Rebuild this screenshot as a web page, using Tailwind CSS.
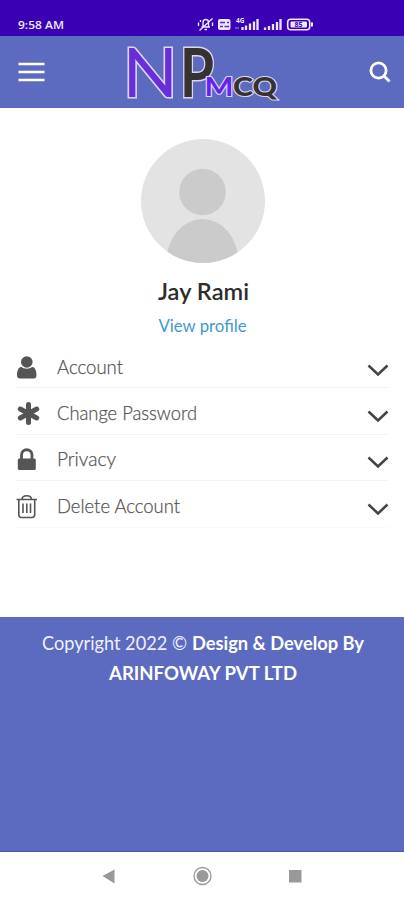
<!DOCTYPE html>
<html lang="en">
<head>
<meta charset="utf-8">
<meta name="viewport" content="width=device-width, initial-scale=1">
<title>Profile</title>
<script src="https://cdn.jsdelivr.net/npm/@tailwindcss/browser@4"></script>
</head>
<body class="w-[404px] h-[900px] overflow-hidden bg-white font-['Lato',sans-serif] flex flex-col">
<div class="h-9 shrink-0 bg-[#3a00b3]">
  <svg class="block" width="404" height="36" viewBox="0 0 404 36" fill="none" stroke="#eee6ff" font-family="Open Sans, sans-serif">
    <text x="18" y="28.500" font-size="11.500" font-weight="600" fill="#f0eaff" stroke="none" textLength="46" lengthAdjust="spacingAndGlyphs">9:58 AM</text>
    <path d="M201.500 27h8.500M203 26.500v-4c0-4 5.500-4 5.500 0v4M204.500 29.500h2.500M199.500 30.500l13-12M198.500 22.500v3.500M200.500 20v2M212.500 22.500v3.500" stroke-width="1.400"/>
    <rect x="218" y="19" width="12.500" height="11" rx="2" fill="#eee6ff" stroke="none"/>
    <path d="M220 22.500h5M227 22.500h2M220 26.500h3M224.500 26.500h4.500" stroke="#5a2bc4" stroke-width="1.400"/>
    <text x="236" y="23" font-size="6.500" font-weight="700" fill="#eee6ff" stroke="none">4G</text>
    <path d="M235 28h4" stroke-width="1.500" opacity=".4"/>
    <path d="M242.500 30v-3M246 30v-4.500M250 30v-6.500M254 30v-8.500M257.500 30v-11M265 30v-2.500M269 30v-4M273 30v-6M277 30v-8M280.500 30v-11" stroke-width="2.300"/>
    <rect x="287.700" y="19.200" width="22" height="10.600" rx="3" stroke-width="1.600"/>
    <rect x="290.500" y="21.500" width="16.500" height="6" rx="1" fill="#eee6ff" stroke="none"/>
    <text x="294.500" y="27.200" font-size="7" font-weight="700" fill="#3a00b3" stroke="none">85</text>
    <path d="M312 22.500v4" stroke-width="2"/>
  </svg>
</div>
<header class="h-[72px] shrink-0 bg-[#5c6bc0] flex items-center">
  <svg class="ml-[18px]" width="27" height="20" viewBox="0 0 27 20"><path d="M.5 2h26M.5 10h26M.5 18h26" stroke="#fff" stroke-width="2.700"/></svg>
  <svg class="ml-[75px] mr-auto overflow-visible" width="160" height="72" viewBox="120 36 160 72" font-family="Lato, sans-serif" stroke="#dcd6f4" stroke-linejoin="miter" paint-order="stroke">
    <text x="122.500" y="96.500" font-size="67" font-weight="400" fill="#6a2ddb" stroke-width="3" textLength="55.500" lengthAdjust="spacingAndGlyphs">N</text>
    <text x="180" y="96.500" font-size="66" font-weight="700" fill="#35322f" stroke-width="3" textLength="34" lengthAdjust="spacingAndGlyphs">P</text>
    <text x="204.500" y="96" font-size="27" font-weight="700" fill="#6524ed" stroke-width="2.200" textLength="29" lengthAdjust="spacingAndGlyphs">M</text>
    <text x="233" y="96" font-size="27" font-weight="900" fill="#35322f" stroke-width="2.200" textLength="44" lengthAdjust="spacingAndGlyphs">CQ</text>
  </svg>
  <svg class="mr-[13px]" width="22" height="22" viewBox="0 0 22 22" fill="none" stroke="#fff" stroke-width="2.800"><circle cx="9.500" cy="9.500" r="7.600"/><path d="M15 15l5.500 5.500"/></svg>
</header>
<main class="h-[509px] shrink-0 flex flex-col items-center">
  <svg class="mt-[31px] ml-px shrink-0" width="124" height="124" viewBox="0 0 124 124"><defs><clipPath id="a"><circle cx="62" cy="62" r="62"/></clipPath></defs><g clip-path="url(#a)"><path fill="#e3e3e3" d="M0 0h124v124H0z"/><circle cx="61.500" cy="53" r="23.300" fill="#cbcbcb"/><ellipse cx="61.500" cy="123" rx="36" ry="43" fill="#cbcbcb"/></g></svg>
  <h1 class="mt-[14px] ml-px h-[30px] font-semibold"><svg class="block" width="100" height="30"><text x="5" y="22.500" font-size="22" fill="#2d2d2d" textLength="91" lengthAdjust="spacingAndGlyphs">Jay Rami</text></svg></h1>
  <a class="mt-[6px] h-6"><svg class="block" width="100" height="24"><text x="6.500" y="18.500" font-size="16.500" fill="#409bd0" textLength="88" lengthAdjust="spacingAndGlyphs">View profile</text></svg></a>
  <ul class="mt-[5px] w-full pl-4 pr-[15px]">
    <li class="h-[46.400px] pt-[10px] border-b border-[#f4f4f4] flex items-center">
      <svg class="shrink-0 mb-1" width="24" height="28" viewBox="0 0 24 28" fill="#555"><circle cx="10.800" cy="8" r="5.800"/><path d="M1 21.500c0-6 2-8.500 4.500-8.500 2.500 2.300 8 2.300 10.500 0 2.500 0 4.500 2.500 4.500 8.500 0 2-1 3-3 3h-13.500c-2 0-3-1-3-3z"/></svg>
      <svg class="ml-[17px] mb-1 flex-1" height="28" fill="#555" font-weight="300" font-size="19" stroke="#555" stroke-width=".25"><text x="0" y="20" textLength="66" lengthAdjust="spacingAndGlyphs">Account</text></svg>
      <svg width="22" height="14" viewBox="0 0 22 14" fill="none" stroke="#444" stroke-width="2.500"><path d="M1.500 2.500l9.500 9 9.500-9"/></svg>
    </li>
    <li class="h-[46.400px] pt-[10px] border-b border-[#f4f4f4] flex items-center">
      <svg class="shrink-0 mb-1" width="24" height="28" viewBox="0 0 24 28" stroke="#555" stroke-width="5" stroke-linecap="round"><path d="M12.500 4.500v18M4.300 9l16.400 9M20.700 9L4.300 18"/></svg>
      <svg class="ml-[17px] mb-1 flex-1" height="28" fill="#555" font-weight="300" font-size="19" stroke="#555" stroke-width=".25"><text x="0" y="20" textLength="140" lengthAdjust="spacingAndGlyphs">Change Password</text></svg>
      <svg width="22" height="14" viewBox="0 0 22 14" fill="none" stroke="#444" stroke-width="2.500"><path d="M1.500 2.500l9.500 9 9.500-9"/></svg>
    </li>
    <li class="h-[46.400px] pt-[10px] border-b border-[#f4f4f4] flex items-center">
      <svg class="shrink-0 mb-1" width="24" height="28" viewBox="0 0 24 28" fill="none"><path d="M5.500 13V9c0-7 10.500-7 10.500 0v4" stroke="#555" stroke-width="2.800"/><rect x="1.800" y="12.500" width="18" height="11.500" rx="1.500" fill="#555"/></svg>
      <svg class="ml-[17px] mb-1 flex-1" height="28" fill="#555" font-weight="300" font-size="19" stroke="#555" stroke-width=".25"><text x="0" y="20" textLength="59" lengthAdjust="spacingAndGlyphs">Privacy</text></svg>
      <svg width="22" height="14" viewBox="0 0 22 14" fill="none" stroke="#444" stroke-width="2.500"><path d="M1.500 2.500l9.500 9 9.500-9"/></svg>
    </li>
    <li class="h-[46.400px] pt-[10px] border-b border-[#fafafa] flex items-center">
      <svg class="shrink-0 mb-1" width="24" height="28" viewBox="0 0 24 28" fill="none" stroke="#555" stroke-width="1.600"><path d="M.5 6.500h20.500M6 6.500c0-5 9.500-5 9.500 0M2.800 6.500v15c0 2 .8 3 2.700 3H16c1.900 0 2.700-1 2.700-3v-15M7 10.500v9.500M10.800 10.500v9.500M14.500 10.500v9.500"/></svg>
      <svg class="ml-[17px] mb-1 flex-1" height="28" fill="#555" font-weight="300" font-size="19" stroke="#555" stroke-width=".25"><text x="0" y="20" textLength="123" lengthAdjust="spacingAndGlyphs">Delete Account</text></svg>
      <svg width="22" height="14" viewBox="0 0 22 14" fill="none" stroke="#444" stroke-width="2.500"><path d="M1.500 2.500l9.500 9 9.500-9"/></svg>
    </li>
  </ul>
</main>
<footer class="h-[235px] shrink-0 bg-[#5c6bc0] border-b border-[#5055ae] pt-[11px]">
  <svg class="block" width="404" height="60" fill="#fff" font-size="19"><text x="42" y="21.500" fill="#eef0ff" textLength="145" lengthAdjust="spacingAndGlyphs">Copyright 2022 ©</text><text x="192" y="21.500" font-weight="700" textLength="172" lengthAdjust="spacingAndGlyphs">Design &amp; Develop By</text><text x="109" y="51.500" font-weight="700" textLength="188" lengthAdjust="spacingAndGlyphs">ARINFOWAY PVT LTD</text></svg>
</footer>
<nav class="h-12 shrink-0 bg-white">
  <svg class="block" width="404" height="48" fill="#999"><path d="M102.500 24l12-6.500v14z"/><circle cx="202.500" cy="24" r="6"/><circle cx="202.500" cy="24" r="8.500" fill="none" stroke="#999" stroke-width="1.300"/><rect x="289" y="18" width="12.500" height="12.500"/></svg>
</nav>
</body>
</html>
